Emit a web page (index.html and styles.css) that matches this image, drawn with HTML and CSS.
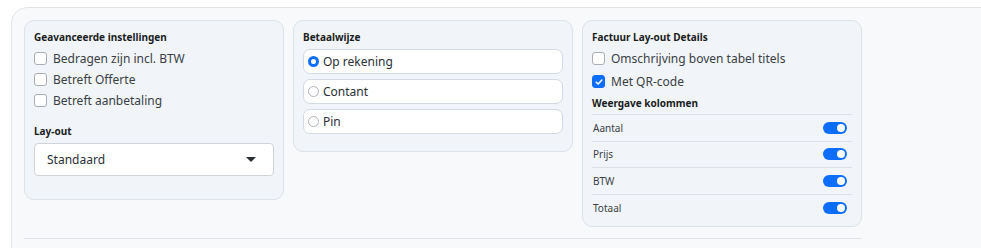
FILE: index.html
```html
<!DOCTYPE html>
<html lang="nl">
<head>
<meta charset="utf-8">
<title>Factuur instellingen</title>
<link rel="stylesheet" href="styles.css">
</head>
<body>
<div class="shell">
  <div class="panels">
    <section class="panel panel-adv">
      <h3 class="ptitle">Geavanceerde instellingen</h3>
      <label class="check"><span class="box"></span><span>Bedragen zijn incl. BTW</span></label>
      <label class="check"><span class="box"></span><span>Betreft Offerte</span></label>
      <label class="check"><span class="box"></span><span>Betreft aanbetaling</span></label>
      <h3 class="ptitle layout-title">Lay-out</h3>
      <div class="select"><span>Standaard</span><span class="caret"></span></div>
    </section>

    <section class="panel panel-pay">
      <h3 class="ptitle">Betaalwijze</h3>
      <div class="options">
        <label class="option"><span class="radio on"></span><span>Op rekening</span></label>
        <label class="option"><span class="radio"></span><span>Contant</span></label>
        <label class="option"><span class="radio"></span><span>Pin</span></label>
      </div>
    </section>

    <section class="panel panel-details">
      <h3 class="ptitle">Factuur Lay-out Details</h3>
      <label class="check check-lg"><span class="box"></span><span>Omschrijving boven tabel titels</span></label>
      <label class="check check-lg"><span class="box on"><svg viewBox="0 0 12 12" width="10" height="10"><path d="M2.6 6.2 L5 8.5 L9.4 3.6" fill="none" stroke="#fff" stroke-width="1.8" stroke-linecap="round" stroke-linejoin="round"/></svg></span><span>Met QR-code</span></label>
      <h3 class="ptitle cols-title">Weergave kolommen</h3>
      <div class="cols">
        <div class="col-row"><span>Aantal</span><span class="toggle"></span></div>
        <div class="col-row"><span>Prijs</span><span class="toggle"></span></div>
        <div class="col-row"><span>BTW</span><span class="toggle"></span></div>
        <div class="col-row"><span>Totaal</span><span class="toggle"></span></div>
      </div>
    </section>
  </div>
  <div class="divider"></div>
</div>
</body>
</html>
```

FILE: styles.css
```css
* { box-sizing: border-box; }
html, body { margin: 0; padding: 0; background: #ffffff; }
body {
  font-family: "Noto Sans", "Open Sans", sans-serif;
  color: #2b3036;
  overflow: hidden;
}
.shell {
  margin: 7px -40px 0 11px;
  background: #f8f9fb;
  border: 1px solid #e2e6ec;
  border-radius: 16px;
  padding: 12px 12px 30px 12px;
  min-height: 260px;
}
.panels {
  display: flex;
  gap: 9px;
  align-items: flex-start;
}
.panel {
  background: #f1f4f8;
  border: 1px solid #dce2ea;
  border-radius: 10px;
  padding: 9px 9px 0 9px;
}
.panel-adv { width: 260px; padding-bottom: 23px; }
.panel-pay { width: 280px; padding-bottom: 17px; }
.panel-details { width: 280px; padding-bottom: 4px; }
.ptitle {
  margin: 0;
  font-size: 10px;
  font-weight: 700;
  line-height: 15px;
  color: #1a1d21;
}
.check {
  display: flex;
  align-items: center;
  gap: 6px;
  font-size: 12px;
  line-height: 17px;
  height: 21px;
  color: #3a3f46;
}
.check-lg { height: 23px; }
.panel-adv .ptitle + .check { margin-top: 3px; }
.panel-details .ptitle + .check { margin-top: 2px; }
.box {
  width: 13px;
  height: 13px;
  flex: none;
  border: 1px solid #a9aeb5;
  border-radius: 3px;
  background: #fff;
  display: flex;
  align-items: center;
  justify-content: center;
}
.box.on { background: #0d6efd; border-color: #0d6efd; }
.layout-title { margin-top: 13px; }
.select {
  margin-top: 4px;
  height: 33px;
  background: #fff;
  border: 1px solid #cfd4da;
  border-radius: 4px;
  display: flex;
  align-items: center;
  justify-content: space-between;
  padding: 0 17px 0 12px;
  font-size: 12px;
  color: #2b3036;
}
.caret {
  width: 0;
  height: 0;
  border-left: 5px solid transparent;
  border-right: 5px solid transparent;
  border-top: 5px solid #2a2d31;
}
.options {
  margin-top: 4px;
  display: flex;
  flex-direction: column;
  gap: 5px;
}
.option {
  height: 25px;
  background: #fff;
  border: 1px solid #d3dae4;
  border-radius: 7px;
  display: flex;
  align-items: center;
  gap: 4px;
  padding-left: 4px;
  font-size: 12px;
  color: #2b3036;
}
.radio {
  width: 11px;
  height: 11px;
  flex: none;
  border-radius: 50%;
  border: 1px solid #aeb3b9;
  background: #fff;
}
.radio.on {
  border: 3px solid #0d6efd;
  background: #fff;
}
.cols-title { margin-top: 3px; line-height: 15px; padding-bottom: 3px; }
.cols { border-top: 1px solid #dce1e8; }
.col-row {
  display: flex;
  align-items: center;
  justify-content: space-between;
  height: 26.67px;
  border-bottom: 1px solid #dce1e8;
  font-size: 10px;
  color: #3a3f46;
  padding: 0 5px 0 1px;
}
.col-row:last-child { border-bottom: 0; }
.toggle {
  position: relative;
  width: 24px;
  height: 12px;
  border-radius: 6px;
  background: #0d6efd;
}
.toggle::after {
  content: "";
  position: absolute;
  right: 2px;
  top: 2px;
  width: 8px;
  height: 8px;
  border-radius: 50%;
  background: #fff;
}
.divider {
  margin-top: 11px;
  width: 838px;
  height: 1px;
  background: #dfe3e9;
}
```
